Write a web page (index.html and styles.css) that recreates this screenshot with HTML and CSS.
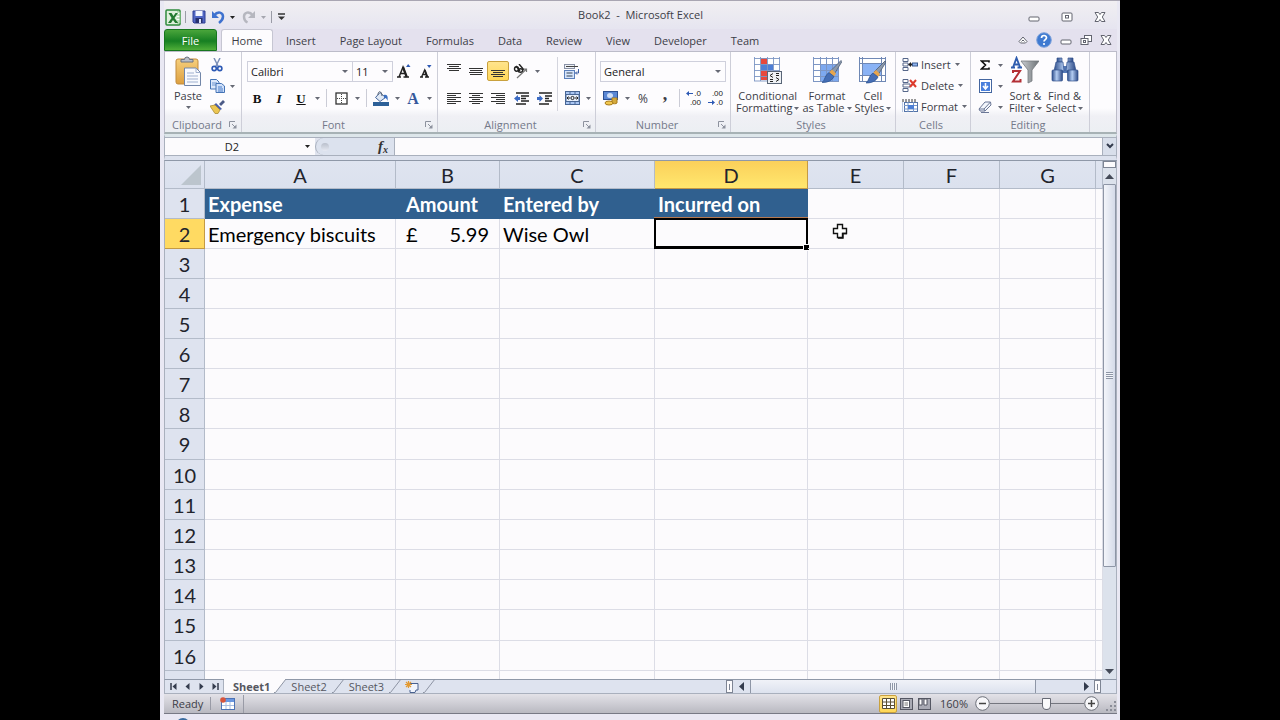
FILE: index.html
```html
<!DOCTYPE html>
<html lang="en">
<head>
<meta charset="utf-8">
<title>Book2 - Microsoft Excel</title>
<link rel="stylesheet" href="styles.css">
</head>
<body>
<svg class="defs" aria-hidden="true">
  <defs>
    <linearGradient id="steel" x1="0" y1="0" x2="1" y2="0"><stop offset="0" stop-color="#2f4f8c"/><stop offset=".45" stop-color="#b4cdf2"/><stop offset="1" stop-color="#2d4a86"/></linearGradient>
    <linearGradient id="grey" x1="0" y1="0" x2="1" y2="0"><stop offset="0" stop-color="#c9cdd1"/><stop offset="1" stop-color="#6d7276"/></linearGradient>
    <linearGradient id="gold" x1="0" y1="0" x2="0" y2="1"><stop offset="0" stop-color="#f6cf7c"/><stop offset="1" stop-color="#dd9f3f"/></linearGradient>
    <symbol id="caret" viewBox="0 0 5 3"><path d="M0 0h5L2.500 3z" fill="currentColor"/></symbol>
    <symbol id="brush" viewBox="0 0 20 22"><path d="M19 0l1 1-8 13-4-3z" fill="#8b99ac" stroke="#4e5d75" stroke-width=".8"/><path d="M10 9l4 4-2 3-5-4z" fill="#e8a54c"/><path d="M7 12l5 4c-2 4-6 6-12 6 3-2 3-8 7-10z" fill="#456eb5" stroke="#28508f" stroke-width=".7"/></symbol>
    <symbol id="min" viewBox="0 0 12 12"><rect x="1" y="6" width="10" height="4" rx="1" fill="#fff" stroke="#62646f"/></symbol>
    <symbol id="close" viewBox="0 0 12 12"><path d="M1 1.500h3.500L6 3.500l1.500-2H11L8.300 6 11 10.500H7.500L6 8.500l-1.500 2H1L3.700 6z" fill="#fff" stroke="#62646f"/></symbol>
    <symbol id="launch" viewBox="0 0 8 8"><path d="M.5 6V.5H6" fill="none" stroke="#8d929e"/><path d="M3 3l3 3" stroke="#8d929e"/><path d="M7.500 3.500v4h-4z" fill="#8d929e"/></symbol>
  </defs>
</svg>

<main class="window">
  <header class="titlebar">
    <nav class="quick" aria-label="Quick access">
      <button aria-label="Excel"><svg width="17" height="17" viewBox="0 0 17 17"><rect x="1" y="1" width="14" height="15" rx="1" fill="#dff0dc" stroke="#2f8a3c" stroke-width="1.500"/><path d="M12 3h3v11h-3M12 6h3M12 9h3M12 12h3" fill="#fff" stroke="#7fbf7f"/><path d="M3.500 4h3l2 3 2-3h2.500l-3.500 5 3.700 5h-3L8 11l-2 3H3l3.600-5z" fill="#237a30"/></svg></button>
      <i class="vline"></i>
      <button aria-label="Save"><svg width="14" height="14" viewBox="0 0 14 14"><path d="M1 1h12v12H2l-1-1z" fill="#5267c4" stroke="#2f3f94"/><rect x="3.500" y="1" width="7" height="5" fill="#f4f6ff"/><rect x="3.500" y="8" width="7" height="5" fill="#27306e"/><rect x="7" y="9" width="2" height="4" fill="#dfe4fa"/></svg></button>
      <button aria-label="Undo"><svg width="14" height="14" viewBox="0 0 14 14"><path d="M3 5.500c4-5 9-3 9 1 0 3-2 5-4 6.500" fill="none" stroke="#3f72cf" stroke-width="2.500"/><path d="M1 1v7h7z" fill="#3f72cf"/></svg></button>
      <button class="drop dark" aria-label="Undo history"><svg><use href="#caret"/></svg></button>
      <button aria-label="Redo"><svg width="14" height="14" viewBox="0 0 14 14"><path d="M11 5.500c-4-5-9-3-9 1 0 3 1.500 5 3.500 6" fill="none" stroke="#b6b7bf" stroke-width="2.500"/><path d="M13 1v7H6z" fill="#b6b7bf"/></svg></button>
      <button class="drop faded" aria-label="Redo history"><svg><use href="#caret"/></svg></button>
      <i class="vline"></i>
      <button aria-label="Customize"><svg width="7" height="8" viewBox="0 0 7 8"><path d="M0 1h7" stroke="#333" stroke-width="1.500"/><path d="M0 3.500h7L3.500 7z" fill="#333"/></svg></button>
    </nav>
    <h1>Book2&nbsp; -&nbsp; Microsoft Excel</h1>
    <div class="winbtns">
      <button aria-label="Minimize"><svg width="12" height="12"><use href="#min"/></svg></button>
      <button aria-label="Maximize"><svg width="12" height="12" viewBox="0 0 12 12"><rect x="1" y="2" width="10" height="8" rx="1" fill="#fff" stroke="#62646f"/><rect x="4.500" y="4.500" width="3" height="2.500" fill="#fff" stroke="#62646f"/></svg></button>
      <button aria-label="Close"><svg width="12" height="12"><use href="#close"/></svg></button>
    </div>
  </header>

  <nav class="tabs" aria-label="Ribbon tabs">
    <button class="file">File</button>
    <button class="home">Home</button>
    <button>Insert</button>
    <button>Page Layout</button>
    <button>Formulas</button>
    <button>Data</button>
    <button>Review</button>
    <button>View</button>
    <button>Developer</button>
    <button>Team</button>
    <div class="docbtns">
      <button aria-label="Collapse ribbon"><svg width="10" height="10" viewBox="0 0 10 10"><path d="M1 6.500L5 2l4 4.500-1.500 1.500h-5z" fill="#fff" stroke="#62646f"/><path d="M3.500 6.500L5 5l1.500 1.500" fill="none" stroke="#62646f"/></svg></button>
      <button aria-label="Help"><svg width="16" height="16" viewBox="0 0 16 16"><circle cx="8" cy="8" r="7.300" fill="#3f7ad0" stroke="#7fa3dc"/><path d="M5.500 6c0-3.300 5-3.200 5-.3C10.500 7.600 8 7.600 8 9.600" fill="none" stroke="#fff" stroke-width="1.700"/><circle cx="8" cy="12" r="1.100" fill="#fff"/></svg></button>
      <button aria-label="Minimize workbook"><svg width="12" height="12"><use href="#min"/></svg></button>
      <button aria-label="Restore workbook"><svg width="12" height="12" viewBox="0 0 12 12"><rect x="4.500" y="1.500" width="7" height="6" fill="#fff" stroke="#62646f"/><rect x="1" y="4.500" width="7" height="6" fill="#fff" stroke="#62646f"/><rect x="3.500" y="6.500" width="2" height="2" fill="none" stroke="#62646f"/></svg></button>
      <button aria-label="Close workbook"><svg width="12" height="12"><use href="#close"/></svg></button>
    </div>
  </nav>

  <section class="ribbon">
    <section class="group clip">
      <div class="body">
        <button class="big"><svg width="28" height="30" viewBox="0 0 28 30"><rect x="2" y="3" width="22" height="25" rx="2" fill="url(#gold)" stroke="#c18b3c"/><path d="M7 6V3.500h3.500a2.500 2.500 0 0 1 5 0H19V6z" fill="#b9bfc9" stroke="#6c7280"/><path d="M10.500 12H22l4.500 4.500v13h-16z" fill="#f8fafe" stroke="#7286a8"/><path d="M22 12v4.500h4.500M13 17h7M13 20h11M13 23h11M13 26h11" fill="none" stroke="#9fb0cf"/></svg><span>Paste</span><svg class="caret"><use href="#caret"/></svg></button>
        <div class="stack">
          <div class="row"><button class="ico" aria-label="Cut"><svg width="12" height="14" viewBox="0 0 12 14"><path d="M3 0l4.500 9M9 0L4.500 9" stroke="#7c90b8" stroke-width="1.500"/><circle cx="3.200" cy="10.500" r="2.100" fill="none" stroke="#2d59b4" stroke-width="1.600"/><circle cx="8.800" cy="10.500" r="2.100" fill="none" stroke="#2d59b4" stroke-width="1.600"/></svg></button></div>
          <div class="row"><button class="ico" aria-label="Copy"><svg width="15" height="14" viewBox="0 0 15 14"><path d="M.5.500h6L9 3v7H.5z" fill="#dce8fb" stroke="#4473b5"/><path d="M2 4h5M2 6h5" stroke="#6c95d0"/><path d="M6 4.500h5.500L14.500 7v6.500H6z" fill="#cfe0fa" stroke="#4473b5"/><path d="M8 8h4M8 10h5M8 12h5" stroke="#4a7cc7"/></svg></button><button class="drop" aria-label="Copy options"><svg><use href="#caret"/></svg></button></div>
          <div class="row"><button class="ico" aria-label="Format Painter"><svg width="15" height="14" viewBox="0 0 15 14"><path d="M9 4l4-4 2 2-4 4z" fill="#4b5a86"/><path d="M6 3l6 6-2 1-6-5z" fill="#4a5fa8"/><path d="M0 6l5-1 5 5-2 3.500H5z" fill="#ecc652" stroke="#a98b35" stroke-width=".8"/></svg></button></div>
        </div>
      </div>
      <footer><span>Clipboard</span><button class="launch" aria-label="Clipboard options"><svg width="8" height="8"><use href="#launch"/></svg></button></footer>
    </section>

    <section class="group font">
      <div class="body lines">
        <div class="row">
          <span class="combo name"><select aria-label="Font"><option>Calibri</option></select></span><span class="combo size"><select aria-label="Font size"><option>11</option></select></span>
          <button class="ico" aria-label="Grow font"><svg width="14" height="16" viewBox="0 0 14 16"><path d="M0 14h4M6.500 14H12M2 14L6 4l3.700 10M4 10.500h4" fill="none" stroke="#222" stroke-width="1.500"/><path d="M6 4l3.700 10" stroke="#222" stroke-width="2.200"/><path d="M9 4l2.200-3L13.500 4z" fill="#2d59b4"/></svg></button>
          <button class="ico" aria-label="Shrink font"><svg width="12" height="16" viewBox="0 0 12 16"><path d="M0 14h3M5 14h4M1.500 14L4.700 7 7.300 14M3 11.500h3" fill="none" stroke="#222" stroke-width="1.300"/><path d="M4.700 7l2.600 7" stroke="#222" stroke-width="2"/><path d="M7 2h4.500L9.200 5z" fill="#2d59b4"/></svg></button>
        </div>
        <div class="row">
          <button class="ico serif"><b>B</b></button><button class="ico serif"><b><em>I</em></b></button><button class="ico serif"><b><u>U</u></b></button><button class="drop" aria-label="Underline options"><svg><use href="#caret"/></svg></button><i class="sep"></i>
          <button class="ico" aria-label="Borders"><svg width="13" height="13" viewBox="0 0 13 13"><rect x="1" y="1" width="11" height="11" fill="#fff" stroke="#333" stroke-width="1.300"/><path d="M6.500 2v10M2 6.500h10" stroke="#444" stroke-dasharray="1 1"/></svg></button><button class="drop" aria-label="Border options"><svg><use href="#caret"/></svg></button><i class="sep"></i>
          <button class="ico" aria-label="Fill colour"><svg width="16" height="15" viewBox="0 0 16 15"><path d="M7 1.500L2.500 6.500 7 10.500l5.500-4z" fill="#dfe8f4" stroke="#44659a"/><path d="M5 4c0-5 4-4 4 1" fill="none" stroke="#55606f"/><path d="M11 4c4-1 4 3 3.500 6-1-3-1.500-3-3.500-3z" fill="#3b6fc0"/><rect y="11" width="16" height="4" fill="#2d6098"/></svg></button><button class="drop" aria-label="Fill options"><svg><use href="#caret"/></svg></button><button class="ico serif blue"><b>A</b></button><button class="drop" aria-label="Font colour options"><svg><use href="#caret"/></svg></button>
        </div>
      </div>
      <footer><span>Font</span><button class="launch" aria-label="Font options"><svg width="8" height="8"><use href="#launch"/></svg></button></footer>
    </section>

    <section class="group align">
      <div class="body">
        <div class="lines">
          <div class="row">
            <button class="ico up" aria-label="Top align"><svg width="14" height="14" viewBox="0 0 14 14"><path d="M0 .5h14M2 2.500h10M0 4.500h14M2 6.500h10" stroke="#333"/></svg></button>
            <button class="ico" aria-label="Middle align"><svg width="14" height="14" viewBox="0 0 14 14"><path d="M0 4.500h14M1 6.500h12M0 8.500h14M1 10.500h12" stroke="#333"/></svg></button>
            <button class="ico on" aria-label="Bottom align"><svg width="14" height="14" viewBox="0 0 14 14"><path d="M0 6.500h14M2 8.500h10M0 10.500h14M2 12.500h10" stroke="#333"/></svg></button>
            <button class="ico wide" aria-label="Orientation"><svg width="16" height="15" viewBox="0 0 16 15"><ellipse cx="3.500" cy="5" rx="2" ry="2.200" fill="none" stroke="#222" stroke-width="1.400"/><path d="M3 2l4 5M6 0l5 6" stroke="#222" stroke-width="1.400"/><ellipse cx="7.500" cy="6.500" rx="2.200" ry="1.800" fill="none" stroke="#222" stroke-width="1.400"/><path d="M4 14L13.500 5M10.500 5h3v3" fill="none" stroke="#777" stroke-width="1.200"/></svg></button><button class="drop near" aria-label="Orientation options"><svg><use href="#caret"/></svg></button>
          </div>
          <div class="row">
            <button class="ico" aria-label="Align left"><svg width="14" height="11" viewBox="0 0 14 11"><path d="M0 .5h14M0 2.500h9M0 4.500h14M0 6.500h9M0 8.500h14M0 10.500h9" stroke="#333"/></svg></button>
            <button class="ico" aria-label="Centre"><svg width="14" height="11" viewBox="0 0 14 11"><path d="M0 .5h14M3 2.500h8M0 4.500h14M3 6.500h8M0 8.500h14M3 10.500h8" stroke="#333"/></svg></button>
            <button class="ico" aria-label="Align right"><svg width="14" height="11" viewBox="0 0 14 11"><path d="M0 .5h14M5 2.500h9M0 4.500h14M5 6.500h9M0 8.500h14M5 10.500h9" stroke="#333"/></svg></button>
            <button class="ico wide" aria-label="Decrease indent"><svg width="15" height="13" viewBox="0 0 15 13"><path d="M2 1h13M7 4h8M7 6.500h5M7 9h8M2 12h10" stroke="#222" stroke-width="1.500"/><path d="M0 6.500L4 3v2h2v3H4v2z" fill="#3c6bc4"/></svg></button>
            <button class="ico" aria-label="Increase indent"><svg width="15" height="13" viewBox="0 0 15 13"><path d="M2 1h13M8 4h7M8 6.500h4M8 9h7M2 12h10" stroke="#222" stroke-width="1.500"/><path d="M6 6.500L2.500 3v2H0v3h2.500v2z" fill="#3c6bc4"/></svg></button>
          </div>
        </div>
        <i class="tall"></i>
        <div class="lines">
          <div class="row"><button class="ico" aria-label="Wrap text"><svg width="16" height="15" viewBox="0 0 16 15"><rect x=".5" y=".5" width="10" height="4" fill="#eef1f7" stroke="#8a92a6"/><path d="M2 2.500h12" stroke="#444"/><rect x=".5" y="6.500" width="10" height="8" fill="#d6e4fb" stroke="#5b80bb"/><path d="M2.500 9h6M2.500 12h6" stroke="#345"/><path d="M14.500 5v4h-3M13 7.500L11.500 9l1.500 1.500" fill="none" stroke="#3c5ea4"/></svg></button></div>
          <div class="row"><button class="ico" aria-label="Merge and centre"><svg width="15" height="14" viewBox="0 0 15 14"><rect x=".5" y=".5" width="14" height="13" fill="#a9c5f2" stroke="#486695"/><path d="M5 0v4M10 0v4M5 10v4M10 10v4" stroke="#486695"/><rect x="1" y="3.500" width="13" height="7" fill="#e8f0fd" stroke="#486695"/><path d="M2 7h3M13 7h-3M3.500 5.500L2 7l1.500 1.500M11.500 5.500L13 7l-1.500 1.500" fill="none" stroke="#222"/><circle cx="7.500" cy="7" r="1.600" fill="none" stroke="#222"/></svg></button><button class="drop" aria-label="Merge options"><svg><use href="#caret"/></svg></button></div>
        </div>
      </div>
      <footer><span>Alignment</span><button class="launch" aria-label="Alignment options"><svg width="8" height="8"><use href="#launch"/></svg></button></footer>
    </section>

    <section class="group number">
      <div class="body lines">
        <div class="row"><span class="combo full"><select aria-label="Number format"><option>General</option></select></span></div>
        <div class="row">
          <button class="ico" aria-label="Currency"><svg width="16" height="15" viewBox="0 0 16 15"><rect x=".5" y=".5" width="14" height="8" fill="#5a87d4" stroke="#2c4f91"/><ellipse cx="7" cy="4.500" rx="3" ry="2.500" fill="#cfdff7"/><path d="M9 7h5v5c0 1-5 1-5 0z" fill="#f2c84f" stroke="#a77b1c"/><path d="M9 9h5M9 11h5" stroke="#a77b1c" stroke-width=".8"/><ellipse cx="6" cy="12" rx="4" ry="2" fill="#f2c84f" stroke="#a77b1c"/></svg></button><button class="drop" aria-label="Currency options"><svg><use href="#caret"/></svg></button>
          <button class="ico pct">%</button><button class="ico comma"><b>,</b></button><i class="sep thin"></i>
          <button class="ico dec" aria-label="Increase decimal"><span><svg width="7" height="5" viewBox="0 0 7 5"><path d="M0 2.500L3 0v2h4v1H3v2z" fill="#2d59b4"/></svg>.0</span><span>.00</span></button><button class="ico dec" aria-label="Decrease decimal"><span>.00</span><span><svg width="7" height="5" viewBox="0 0 7 5"><path d="M7 2.500L4 0v2H0v1h4v2z" fill="#2d59b4"/></svg>.0</span></button>
        </div>
      </div>
      <footer><span>Number</span><button class="launch" aria-label="Number options"><svg width="8" height="8"><use href="#launch"/></svg></button></footer>
    </section>

    <section class="group styles">
      <div class="body">
        <button class="big"><svg width="30" height="30" viewBox="0 0 30 30"><path d="M1 3h26v21H1z" fill="#fff"/><path d="M8 2h6v22H8z" fill="#e8483c"/><path d="M8 8h12v6H8z" fill="#4e7fd6"/><path d="M14 14h4v6h-4z" fill="#6f9be6"/><path d="M1 2.500h26M1 8.500h26M1 14.500h26M1 20.500h26M1.500 1v24M7.500 1v24M14.500 1v24M20.500 1v24M26.500 1v24M1 25h26" stroke="#7d96c4" stroke-width=".9" fill="none"/><rect x="14.500" y="15.500" width="14" height="12" fill="#eef1f5" stroke="#596577"/><path d="M20 17.500l-3 2 3 2M17 23.500h3M17 25.500h3M23 17.500h3M23 19.500h3M23 21.500l3 2-3 2" fill="none" stroke="#222"/></svg><span>Conditional</span><span class="sub">Formatting<svg class="caret"><use href="#caret"/></svg></span></button>
        <button class="big"><svg width="30" height="30" viewBox="0 0 30 30"><path d="M1 3h26v22H1z" fill="#fff"/><path d="M8 8h19v17H8z" fill="#7da9f0"/><path d="M1 2.500h26M1 8.500h26M1 14.500h26M1 20.500h26M1.500 1v25M8.500 1v25M14.500 1v25M20.500 1v25M26.500 1v25M1 25.500h26" stroke="#7d96c4" fill="none"/><svg x="10" y="3" width="20" height="25"><use href="#brush"/></svg></svg><span>Format</span><span class="sub">as Table<svg class="caret"><use href="#caret"/></svg></span></button>
        <button class="big"><svg width="30" height="30" viewBox="0 0 30 30"><path d="M1 3h26v22H1z" fill="#fff"/><path d="M4.500 7.500h19v12h-19z" fill="#8ab3f5"/><path d="M1 2.500h27M1 7.500h27M1 19.500h27M1 25.500h27M1.500 1v25M4.500 1v25M23.500 1v25M27.500 1v25" stroke="#6f88b5" fill="none"/><svg x="8" y="3" width="20" height="26"><use href="#brush"/></svg></svg><span>Cell</span><span class="sub">Styles<svg class="caret"><use href="#caret"/></svg></span></button>
      </div>
      <footer><span>Styles</span></footer>
    </section>

    <section class="group cells">
      <div class="body stack">
        <button class="labelled"><svg width="16" height="13" viewBox="0 0 16 13"><path d="M1 .5h5v3H1zM1 9.500h5v3H1zM1 5h5v3H1z" fill="#fff" stroke="#56678a"/><path d="M6 6.500L9 4v1.500h2v2H9V9z" fill="#222"/><rect x="10.500" y="5" width="5" height="3" fill="#8fb3ee" stroke="#39588d"/></svg>Insert<svg class="caret"><use href="#caret"/></svg></button>
        <button class="labelled"><svg width="16" height="13" viewBox="0 0 16 13"><path d="M1 .5h5v3H1zM1 9.500h5v3H1zM1 5h7v3H1z" fill="#fff" stroke="#56678a"/><path d="M8 1l6 7M14 1L8 8" stroke="#dd3a2c" stroke-width="2"/></svg>Delete<svg class="caret"><use href="#caret"/></svg></button>
        <button class="labelled"><svg width="16" height="14" viewBox="0 0 16 14"><path d="M1 0v3M4 0v3M7 0v3M10 0v3M13 0v3" stroke="#333"/><rect x="2.500" y="3.500" width="13" height="9" fill="#fff" stroke="#5474a8"/><path d="M2 6.500h13M2 10h13M6 3v10M11.500 3v10M0 3v10" stroke="#7a98c9"/><rect x="6" y="6" width="6" height="4" fill="#4d7fd5"/></svg>Format<svg class="caret"><use href="#caret"/></svg></button>
      </div>
      <footer><span>Cells</span></footer>
    </section>

    <section class="group editing">
      <div class="body">
        <div class="stack">
          <div class="row"><button class="ico" aria-label="Sum"><svg width="10" height="10" viewBox="0 0 10 10"><path d="M9 2.500V1H1.500l4 4-4 4H9V7.500" fill="none" stroke="#111" stroke-width="1.600"/></svg></button><button class="drop" aria-label="Sum options"><svg><use href="#caret"/></svg></button></div>
          <div class="row"><button class="ico" aria-label="Fill"><svg width="13" height="14" viewBox="0 0 13 14"><rect x=".5" y=".5" width="12" height="13" fill="#fff" stroke="#4466a0"/><rect x="2" y="3" width="9" height="9" fill="#4b80dc"/><path d="M6.500 4v5M4 7l2.500 3L9 7" fill="none" stroke="#fff" stroke-width="1.600"/></svg></button><button class="drop" aria-label="Fill options"><svg><use href="#caret"/></svg></button></div>
          <div class="row"><button class="ico" aria-label="Clear"><svg width="14" height="12" viewBox="0 0 14 12"><path d="M1 8l6-7h5.500l.5 3-6 6H2z" fill="#f3f6fc" stroke="#6b7796"/><path d="M1 8h5l6.500-7M6 8l1 2M3 11.500h8" fill="none" stroke="#6b7796"/></svg></button><button class="drop" aria-label="Clear options"><svg><use href="#caret"/></svg></button></div>
        </div>
        <button class="big"><svg width="28" height="28" viewBox="0 0 28 28"><path d="M10 5h18l-7 9v11l-4 2V14z" fill="url(#grey)" stroke="#74797d" stroke-width=".8"/><path d="M0 11.500h4M6.500 11.500H11M2 11.500L5.500 2l3.700 9.500M3.500 8.500h4" fill="none" stroke="#2e5cae" stroke-width="1.900"/><path d="M2 17v-2h7L2 25.500h7.500V23" fill="none" stroke="#b32f35" stroke-width="2"/></svg><span>Sort &amp;</span><span class="sub">Filter<svg class="caret"><use href="#caret"/></svg></span></button>
        <button class="big"><svg width="28" height="28" viewBox="0 0 28 28"><rect x="11" y="10" width="6" height="7" fill="#5578b5"/><g fill="url(#steel)" stroke="#31508d" stroke-width=".7"><path d="M6 2h5v4H6zM17 2h5v4h-5z"/><path d="M5 6h7l1 9H3zM16 6h7l2 9H15z"/><rect x="1" y="14" width="10.500" height="11" rx="1"/><rect x="16.500" y="14" width="10.500" height="11" rx="1"/></g></svg><span>Find &amp;</span><span class="sub">Select<svg class="caret"><use href="#caret"/></svg></span></button>
      </div>
      <footer><span>Editing</span></footer>
    </section>
  </section>

  <section class="formula">
    <input class="namebox" aria-label="Name box" value="D2"><button class="drop dark" aria-label="Names"><svg><use href="#caret"/></svg></button>
    <div class="fx"><i></i><button><em>f</em><sub>x</sub></button></div>
    <input class="entry" aria-label="Formula bar">
    <button class="expand" aria-label="Expand formula bar"><svg width="8" height="7" viewBox="0 0 8 7"><path d="M1 1l3 3 3-3" fill="none" stroke="#333b4d" stroke-width="2"/></svg></button>
  </section>

  <section class="sheet">
    <div class="grid">
      <table>
        <colgroup><col class="c0"><col class="ca"><col class="cb"><col class="cc"><col class="cd"><col class="ce"><col class="ce"><col class="ce"><col></colgroup>
        <thead><tr><th class="corner"><svg width="20" height="20" viewBox="0 0 20 20"><path d="M20 0v20H0z" fill="#bcc5cd"/></svg></th><th>A</th><th>B</th><th>C</th><th class="sel">D</th><th>E</th><th>F</th><th>G</th><th></th></tr></thead>
        <tbody>
          <tr class="heads"><th>1</th><td>Expense</td><td class="amt">Amount</td><td>Entered by</td><td>Incurred on</td><td></td><td></td><td></td><td></td></tr>
          <tr><th class="sel">2</th><td>Emergency biscuits</td><td class="amt"><div><span>£</span><span>5.99</span></div></td><td>Wise Owl</td><td class="active"><span class="cursor-cell"></span></td><td class="point"><svg width="16" height="16" viewBox="0 0 16 16"><path d="M5.500 1.500h5v4h4v5h-4v4h-5v-4h-4v-5h4z" fill="#fff" stroke="#111" stroke-width="1.400"/><path d="M6 15h5v-4.500h4" fill="none" stroke="#111" stroke-width="1.400"/></svg></td><td></td><td></td><td></td></tr>
          <tr><th>3</th><td></td><td></td><td></td><td></td><td></td><td></td><td></td><td></td></tr>
          <tr><th>4</th><td></td><td></td><td></td><td></td><td></td><td></td><td></td><td></td></tr>
          <tr><th>5</th><td></td><td></td><td></td><td></td><td></td><td></td><td></td><td></td></tr>
          <tr><th>6</th><td></td><td></td><td></td><td></td><td></td><td></td><td></td><td></td></tr>
          <tr><th>7</th><td></td><td></td><td></td><td></td><td></td><td></td><td></td><td></td></tr>
          <tr><th>8</th><td></td><td></td><td></td><td></td><td></td><td></td><td></td><td></td></tr>
          <tr><th>9</th><td></td><td></td><td></td><td></td><td></td><td></td><td></td><td></td></tr>
          <tr><th>10</th><td></td><td></td><td></td><td></td><td></td><td></td><td></td><td></td></tr>
          <tr><th>11</th><td></td><td></td><td></td><td></td><td></td><td></td><td></td><td></td></tr>
          <tr><th>12</th><td></td><td></td><td></td><td></td><td></td><td></td><td></td><td></td></tr>
          <tr><th>13</th><td></td><td></td><td></td><td></td><td></td><td></td><td></td><td></td></tr>
          <tr><th>14</th><td></td><td></td><td></td><td></td><td></td><td></td><td></td><td></td></tr>
          <tr><th>15</th><td></td><td></td><td></td><td></td><td></td><td></td><td></td><td></td></tr>
          <tr><th>16</th><td></td><td></td><td></td><td></td><td></td><td></td><td></td><td></td></tr>
          <tr><th></th><td></td><td></td><td></td><td></td><td></td><td></td><td></td><td></td></tr>
        </tbody>
      </table>
    </div>
    <div class="vscroll">
      <i class="split"></i>
      <button aria-label="Scroll up"><svg width="9" height="5" viewBox="0 0 9 5"><path d="M0 5h9L4.500 0z" fill="#444a58"/></svg></button>
      <div class="track"><div class="thumb"><i></i></div></div>
      <button aria-label="Scroll down"><svg width="9" height="5" viewBox="0 0 9 5"><path d="M0 0h9L4.500 5z" fill="#444a58"/></svg></button>
    </div>
  </section>

  <nav class="sheets" aria-label="Sheets">
    <div class="arrows">
      <button aria-label="First sheet"><svg width="7" height="7" viewBox="0 0 7 7"><path d="M1 0v7" stroke="#333b4d" stroke-width="1.500"/><path d="M6.500 0v7L2.500 3.500z" fill="#333b4d"/></svg></button>
      <button aria-label="Previous sheet"><svg width="7" height="7" viewBox="0 0 7 7"><path d="M5.500 0v7L1.500 3.500z" fill="#333b4d"/></svg></button>
      <button aria-label="Next sheet"><svg width="7" height="7" viewBox="0 0 7 7"><path d="M1.500 0v7l4-3.500z" fill="#333b4d"/></svg></button>
      <button aria-label="Last sheet"><svg width="7" height="7" viewBox="0 0 7 7"><path d="M6 0v7" stroke="#333b4d" stroke-width="1.500"/><path d="M.5 0v7l4-3.500z" fill="#333b4d"/></svg></button>
    </div>
    <button class="current">Sheet1</button>
    <svg class="slant" viewBox="0 0 12 14"><path d="M0 0h12L1 14H0z" fill="#fcfbfd"/><path d="M0 13.500h1.500L12 0" fill="none" stroke="#8d94a3"/></svg>
    <button>Sheet2</button>
    <svg class="slant" viewBox="0 0 12 14"><path d="M0 13.500h1.500L12 0" fill="none" stroke="#8d94a3"/></svg>
    <button>Sheet3</button>
    <svg class="slant" viewBox="0 0 12 14"><path d="M0 13.500h1.500L12 0" fill="none" stroke="#8d94a3"/></svg>
    <button class="new" aria-label="Insert sheet"><svg width="14" height="12" viewBox="0 0 14 12"><path d="M4 2.500h9V9h-2l-1 2.500H5V9" fill="#f1f5fd" stroke="#4a6290"/><path d="M3.500 0v7M0 3.500h7M1 1l5 5M6 1L1 6" stroke="#e39a32" stroke-width="1.200"/></svg></button>
    <svg class="slant" viewBox="0 0 12 14"><path d="M0 13.500h1.500L12 0" fill="none" stroke="#8d94a3"/></svg>
    <div class="hscroll">
      <i class="grip"></i>
      <button aria-label="Scroll left"><svg width="5" height="9" viewBox="0 0 5 9"><path d="M5 0v9L0 4.500z" fill="#333b4d"/></svg></button>
      <div class="track"><div class="thumb"><i></i></div></div>
      <button aria-label="Scroll right"><svg width="5" height="9" viewBox="0 0 5 9"><path d="M0 0v9l5-4.500z" fill="#333b4d"/></svg></button>
      <i class="grip"></i>
    </div>
  </nav>

  <footer class="status">
    <span class="ready">Ready</span>
    <button class="macro" aria-label="Record macro"><svg width="15" height="13" viewBox="0 0 15 13"><rect x="1.500" y="1.500" width="13" height="11" fill="#fff" stroke="#4d73b5"/><rect x="2" y="2" width="12" height="3" fill="#6a97e0"/><path d="M2 8.500h12M6 5v7M10 5v7" stroke="#a9bfe3"/><circle cx="3" cy="3" r="2.800" fill="#d8553c"/></svg></button>
    <div class="zoomer">
      <button class="view on" aria-label="Normal view"><svg width="13" height="11" viewBox="0 0 13 11"><path d="M.5.500h12v10H.5zM.5 4h12M.5 7.500h12M4.500 0v11M8.500 0v11" fill="#fff" stroke="#5a4f34"/></svg></button>
      <button class="view" aria-label="Page layout view"><svg width="13" height="12" viewBox="0 0 13 12"><rect x=".5" y=".5" width="12" height="11" fill="#a9aab4" stroke="#555763"/><rect x="3" y="2.500" width="6.500" height="7" fill="#fff" stroke="#555763"/><path d="M4.500 5h3.500M4.500 7h3.500" stroke="#777"/></svg></button>
      <button class="view" aria-label="Page break view"><svg width="13" height="12" viewBox="0 0 13 12"><rect x=".5" y=".5" width="12" height="11" fill="#a9aab4" stroke="#555763"/><path d="M1 1h3v6H1zM6 1h3v6H6z" fill="#fff" stroke="#555763"/></svg></button>
      <button class="pctbtn">160%</button>
      <button class="round" aria-label="Zoom out"><svg width="15" height="15" viewBox="0 0 15 15"><circle cx="7.500" cy="7.500" r="6.800" fill="#f7f7fa" stroke="#6d7079"/><path d="M4 7.500h7" stroke="#444" stroke-width="1.500"/></svg></button>
      <input type="range" min="0" max="100" value="61" aria-label="Zoom">
      <button class="round" aria-label="Zoom in"><svg width="15" height="15" viewBox="0 0 15 15"><circle cx="7.500" cy="7.500" r="6.800" fill="#f7f7fa" stroke="#6d7079"/><path d="M4 7.500h7M7.500 4v7" stroke="#444" stroke-width="1.500"/></svg></button>
      <svg class="resize" width="11" height="12" viewBox="0 0 11 12"><path d="M9 2h2M9 6h2M5 6h2M9 10h2M5 10h2M1 10h2" stroke="#8b8d98" stroke-width="2"/></svg>
    </div>
  </footer>
  <div class="below"><i></i></div>
</main>
</body>
</html>
```

FILE: styles.css
```css
* { box-sizing: border-box; }
body { margin: 0; background: #000; font: 11px/13px "Open Sans", "Noto Sans", sans-serif; color: #3c3d47; display: flex; justify-content: center; }
button, input, select { font: inherit; color: inherit; border: 0; margin: 0; padding: 0; background: none; border-radius: 0; outline: 0; }
button { display: inline-flex; align-items: center; justify-content: center; flex: none; white-space: nowrap; }
svg { display: block; flex: none; }
.defs { position: absolute; width: 0; height: 0; }
i { display: block; flex: none; }

.window { width: 75%; height: 100vh; display: flex; flex-direction: column; background: #e9e8f3; padding: 0 3px 0 4px; border-top: 1px solid #a9a6b2; overflow: hidden; }

.titlebar { height: 28px; display: grid; grid-template-columns: 1fr auto 1fr; align-items: center; background: linear-gradient(#f1eff2, #e6e5f0); padding-top: 2px; flex: none; }
.titlebar h1 { margin: 0; font-size: 11px; font-weight: 400; padding-bottom: 4px; }
.quick { display: flex; align-items: center; gap: 2px; padding: 2px 0 0 1px; }
.quick .vline { width: 1px; height: 12px; background: #9a9ba6; margin: 0 4px 0 1px; }
.quick > button + button:not(.drop) { margin-left: 3px; }
.winbtns { display: flex; justify-content: flex-end; gap: 21px; padding: 2px 11px 0 0; }

.drop { width: 10px; align-self: stretch; color: #666974; }
.drop svg, .caret { width: 5px; height: 3px; }
.dark { color: #222; }
.faded { color: #a5a6af; }

.tabs { display: flex; height: 22px; flex: none; background: #e4e1ee; }
.tabs > button { padding: 0 12px; }
.tabs .file { width: 53px; background: linear-gradient(#4aa53b, #167f22 55%, #4fae38); border: 1px solid #17761f; border-radius: 3px 3px 0 0; color: #fff; }
.tabs .home { background: #fdfcfe; margin: 0 1px 0 4px; width: 52px; padding: 0; border: 1px solid #c6c6d2; border-bottom: 0; border-radius: 3px 3px 0 0; }
.docbtns { margin-left: auto; display: flex; align-items: center; gap: 8px; padding-right: 5px; }

.ribbon { display: flex; height: 83px; flex: none; background: linear-gradient(#fdfcfe 70%, #f0f0f5 80%, #eceff3); border: 1px solid #bcbcc9; border-bottom: 2px solid #a7b2b5; }
.group { display: flex; flex-direction: column; border-right: 1px solid #cdced8; flex: none; }
.group .body { flex: 1; display: flex; padding-top: 4px; }
.group footer { display: flex; height: 15px; align-items: center; color: #74798a; padding-right: 4px; }
.group footer span { flex: 1; text-align: center; }
.row { display: flex; align-items: center; height: 20px; }
.ico { width: 22px; height: 20px; }
.group .body.lines, .lines { display: flex; flex-direction: column; gap: 7px; padding-top: 9px; }
.group.align .body { padding-top: 0; }
.stack { display: flex; flex-direction: column; gap: 1px; }
.sep { width: 8px; height: 18px; background: linear-gradient(#cbccd6, #cbccd6) center / 1px 100% no-repeat; }
.sep.thin { width: 6px; }
.tall { width: 1px; height: 54px; background: #d4d5de; margin: 5px 3px 0 2px; }
.big { flex-direction: column; justify-content: flex-start; align-self: flex-start; line-height: 12px; }
.big > svg:first-child { margin: 0 0 4px; }
.big > .caret { margin-top: 4px; color: #666974; }
.sub { display: flex; align-items: center; gap: 2px; }
.caret { color: #666974; }

.clip { width: 77px; }
.clip .body { padding-left: 7px; gap: 3px; }
.clip .big { width: 32px; }
.clip .stack, .editing .stack { margin-top: -1px; }
.clip .ico, .editing .ico { width: 20px; }
.font { width: 196px; }
.font .body { padding-left: 4px; }
.combo { position: relative; height: 21px; border: 1px solid #cfd0dc; background: #fdfcfe; flex: none; }
.combo select { appearance: none; width: 100%; height: 19px; padding: 0 3px; color: #222; }
.combo::after { content: ""; position: absolute; right: 4px; top: 8px; border: 3px solid transparent; border-top-color: #666974; border-bottom: 0; pointer-events: none; }
.combo.name { width: 106px; margin-left: 1px; }
.combo.size { width: 41px; margin-left: -1px; }
.combo.full { width: 126px; }
.serif { font-family: "Liberation Serif", serif; font-size: 13px; color: #111; }
.serif.blue { font-size: 16px; color: #36589c; }
.on { background: linear-gradient(#ffe48d, #ffd757); border: 1px solid #c9a13e; border-radius: 2px; }
.up { align-items: flex-start; padding-top: 3px; }
.wide { width: 24px; }
.drop.near { width: 8px; }
.align { width: 158px; }
.align .body { padding-left: 5px; }
.number { width: 135px; }
.number .body { padding-left: 4px; }
.pct { font-size: 12px; }
.comma { font: 700 18px/18px "Liberation Serif", serif; padding-bottom: 8px; }
.dec { flex-direction: column; align-items: flex-end; font: 8px/9px "Liberation Sans", sans-serif; padding-right: 3px; color: #222; }
.dec span { display: flex; align-items: center; gap: 1px; }
.styles { width: 165px; }
.styles .body { padding-left: 5px; gap: 3px; }
.cells { width: 75px; }
.cells .body { padding-left: 6px; gap: 1px; padding-top: 2px; }
.labelled { height: 20px; align-self: flex-start; gap: 3px; }
.labelled .caret { margin-left: 1px; }
.editing { width: 119px; }
.editing .body { padding-left: 4px; gap: 4px; }
.editing .big > svg:first-child { margin-bottom: 6px; }

.formula { display: flex; height: 26px; flex: none; background: #dfe3ee; border: 1px solid #a9b0bd; border-top: 3px solid #dde6ea; border-bottom: 4px solid #dde2ee; box-shadow: inset 0 1px #a9b0bd, inset 0 -1px #a9b0bd; padding: 1px 0; }
.namebox { width: 134px; background: #fcfbfd; text-align: center; color: #222; }
.formula .drop { width: 16px; background: #fcfbfd; }
.fx { width: 80px; display: flex; align-items: center; justify-content: space-between; border-left: 1px solid #a9b0bd; border-right: 1px solid #a9b0bd; border-radius: 10px 0 0 10px; background: #dce2ee; padding: 0 6px 0 5px; }
.fx i { width: 8px; height: 8px; border-radius: 4px; background: linear-gradient(#b9bfcb, #e6e9f2); }
.fx button { font: 700 15px/15px "Liberation Serif", serif; color: #333; }
.fx sub { font-size: 10px; line-height: 8px; font-style: italic; align-self: flex-end; }
.entry { flex: 1; min-width: 0; background: #fcfbfd; }
.expand { width: 14px; background: #d9dfeb; border-left: 1px solid #a9b0bd; }

.sheet { flex: 1; min-height: 0; display: flex; border-left: 1px solid #a9b0bd; border-top: 1px solid #8f98a8; background: #fcfbfd; }
.grid { flex: 1; min-width: 0; overflow: hidden; }
table { table-layout: fixed; width: 100%; border-collapse: separate; border-spacing: 0; font: 20px/24px Lato, "Open Sans", sans-serif; color: #000; }
.c0 { width: 40px; } .ca { width: 191px; } .cb { width: 104px; } .cc { width: 155px; } .cd { width: 153px; } .ce { width: 96px; }
th, td { padding: 0; height: 30px; border-right: 1px solid #dcdde6; border-bottom: 1px solid #dcdde6; overflow: hidden; white-space: nowrap; }
td { padding-left: 3px; }
tbody tr:nth-child(6n+9) > * { height: 31px; }
th { font-weight: 400; background: #dee3ef; color: #22242c; border-color: #b3bbc9; }
thead th { height: 28px; background: linear-gradient(#dfe4f0, #dbe1ee); }
thead th.sel { background: linear-gradient(#fbd05a, #ffe76e); border-color: #c49a45; }
tbody th.sel { background: #ffda62; border-color: #c49a45; }
.corner svg { margin-left: 16px; }
.heads td:nth-child(-n+5) { background: #30608f; border-color: #30608f; color: #fff; font-weight: 700; }
.amt { padding: 0 10px; }
.amt div { display: flex; justify-content: space-between; }
.active, .point { position: relative; overflow: visible; }
.cursor-cell { position: absolute; inset: -1px; border: 2px solid #000; border-bottom-width: 3px; box-shadow: 0 -1px #b77a52; }
.cursor-cell::after { content: ""; position: absolute; right: -3px; bottom: -4px; width: 5px; height: 5px; background: #000; outline: 1px solid #fcfbfd; }
.point svg { position: absolute; left: 24px; top: 4px; }

.vscroll { width: 14px; display: flex; flex-direction: column; align-items: stretch; background: #dce2ec; border-right: 1px solid #a9b0bd; }
.vscroll .split { height: 7px; background: #fcfbfd; border: 1px solid #7e8594; }
.vscroll button { height: 16px; }
.vscroll .track { flex: 1; }
.vscroll .thumb { height: 80%; border: 1px solid #8e96a6; border-radius: 1px; background: linear-gradient(90deg, #f3f5fa, #d5dbe9); display: grid; place-items: center; }
.vscroll .thumb i { width: 7px; height: 7px; background: repeating-linear-gradient(#8e96a6 0 1px, #f3f5fa 1px 2px); }

.sheets { display: flex; height: 15px; flex: none; background: #dee3ef; border: 1px solid #a9b0bd; border-top-color: #8f98a8; }
.arrows { display: flex; width: 59px; justify-content: space-around; border-right: 1px solid #a9b0bd; padding: 0 1px; }
.sheets > button { padding: 0 3px; color: #55575f; }
.sheets .current { background: #fcfbfd; font-weight: 700; padding: 0 4px 0 9px; margin-top: -1px; }
.sheets .new { padding: 0 2px; }
.slant { width: 12px; height: 14px; margin: -1px 2px 0; }
.current + .slant { margin-left: 0; }
.hscroll { margin-left: auto; width: 41%; padding-right: 15px; display: flex; align-items: stretch; }
.hscroll button { width: 16px; }
.hscroll .track { flex: 1; }
.hscroll .thumb { width: 87%; height: 100%; margin-left: 1px; border: 1px solid #8e96a6; border-top: 0; border-bottom: 0; background: linear-gradient(#f0f2f8, #dde2ee); display: grid; place-items: center; }
.hscroll .thumb i { width: 7px; height: 7px; background: repeating-linear-gradient(90deg, #8e96a6 0 1px, #f3f5fa 1px 2px); }
.grip { width: 7px; background: linear-gradient(#7e8594, #7e8594) center / 1px 6px no-repeat #fcfbfd; border: 1px solid #7e8594; }

.status { display: flex; height: 20px; flex: none; align-items: center; background: linear-gradient(#e3e2e8, #b9b9c1); border-bottom: 1px solid #777985; padding-left: 8px; }
.status .ready { width: 39px; border-right: 1px solid #999ba6; }
.macro { width: 33px; height: 18px; border-right: 1px solid #999ba6; }
.zoomer { margin-left: auto; display: flex; align-items: center; }
.view { width: 18px; height: 18px; }
.pctbtn { width: 42px; }
.round { width: 15px; }
.zoomer input { appearance: none; width: 94px; height: 13px; background: linear-gradient(#74767f, #74767f) center / 100% 1px no-repeat; }
.zoomer input::-webkit-slider-thumb { appearance: none; width: 9px; height: 12px; background: #fafafc; border: 1px solid #666974; border-radius: 1px 1px 5px 5px; }
.resize { margin: 4px 1px 0 6px; }
.below { height: 6px; flex: none; overflow: hidden; padding-left: 12px; }
.below i { width: 14px; height: 14px; border-radius: 7px; background: #3b6b9e; margin-top: 4px; }
```
